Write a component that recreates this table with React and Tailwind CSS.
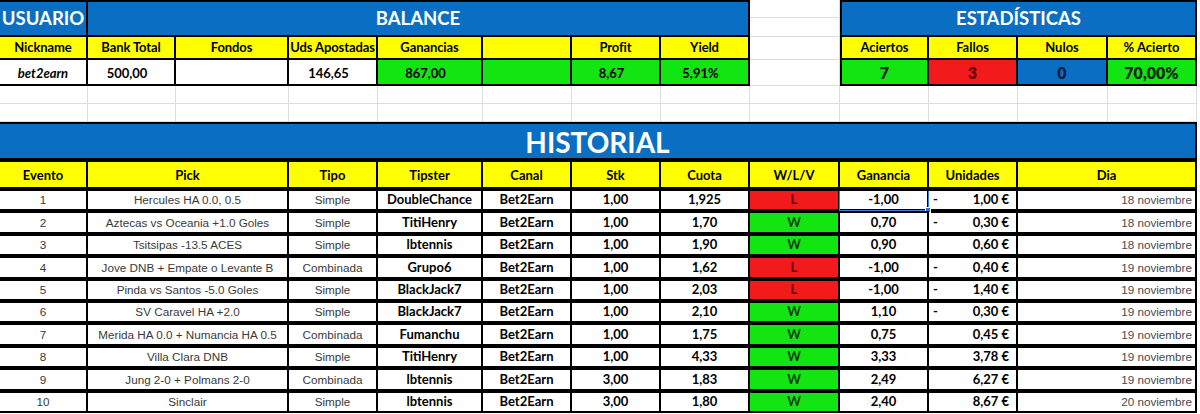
import React from "react";

const GRID =
  "grid grid-cols-[88px_88px_113px_89px_105px_89px_89px_89px_90px_89px_89px_90px_89px]";

const BLUE = "bg-[#0a6fc2]";
const YELLOW = "bg-[#ffff00]";
const GREEN = "bg-[#12e512]";
const RED = "bg-[#f21a1a]";

const rows = [
  [1, "Hercules HA 0.0, 0.5", "Simple", "DoubleChance", "Bet2Earn", "1,00", "1,925", "L", "-1,00", true, "1,00 €", "18 noviembre"],
  [2, "Aztecas vs Oceania +1.0 Goles", "Simple", "TitiHenry", "Bet2Earn", "1,00", "1,70", "W", "0,70", true, "0,30 €", "18 noviembre"],
  [3, "Tsitsipas -13.5 ACES", "Simple", "lbtennis", "Bet2Earn", "1,00", "1,90", "W", "0,90", false, "0,60 €", "18 noviembre"],
  [4, "Jove DNB + Empate o Levante B", "Combinada", "Grupo6", "Bet2Earn", "1,00", "1,62", "L", "-1,00", true, "0,40 €", "19 noviembre"],
  [5, "Pinda vs Santos -5.0 Goles", "Simple", "BlackJack7", "Bet2Earn", "1,00", "2,03", "L", "-1,00", true, "1,40 €", "19 noviembre"],
  [6, "SV Caravel HA +2.0", "Simple", "BlackJack7", "Bet2Earn", "1,00", "2,10", "W", "1,10", true, "0,30 €", "19 noviembre"],
  [7, "Merida HA 0.0 + Numancia HA 0.5", "Combinada", "Fumanchu", "Bet2Earn", "1,00", "1,75", "W", "0,75", false, "0,45 €", "19 noviembre"],
  [8, "Villa Clara DNB", "Simple", "TitiHenry", "Bet2Earn", "1,00", "4,33", "W", "3,33", false, "3,78 €", "19 noviembre"],
  [9, "Jung 2-0 + Polmans 2-0", "Combinada", "lbtennis", "Bet2Earn", "3,00", "1,83", "W", "2,49", false, "6,27 €", "19 noviembre"],
  [10, "Sinclair", "Simple", "lbtennis", "Bet2Earn", "3,00", "1,80", "W", "2,40", false, "8,67 €", "20 noviembre"],
];

const heads = ["Evento", "Pick", "Tipo", "Tipster", "Canal", "Stk", "Cuota", "W/L/V", "Ganancia", "Unidades", "Dia"];

const Cell = ({ className = "", justify = "justify-center", children }) => (
  <div className={`flex items-center ${justify} border-r-2 border-b-2 border-black whitespace-nowrap overflow-hidden ${className}`}>
    {children}
  </div>
);

const Blank = () => <div className="border-r border-b border-[#dcdcdc]" />;

const TopBlock = () => (
  <div className={`${GRID} grid-rows-[37px_23px_26px_18px_18px]`}>
    {/* row 1 */}
    <Cell className={`${BLUE} border-t-2 text-white font-bold text-[18.5px]`}>USUARIO</Cell>
    <Cell className={`${BLUE} col-span-7 border-t-2 text-white font-bold text-[18.5px]`}>BALANCE</Cell>
    <div className="row-span-3 flex flex-col">
      <div className="h-[18px] border-b border-r border-[#dcdcdc]" />
      <div className="h-[19px] border-b border-r border-[#dcdcdc]" />
      <div className="h-[23px] border-b border-r border-[#dcdcdc]" />
      <div className="h-[26px] border-b border-r border-[#dcdcdc]" />
    </div>
    <Cell className={`${BLUE} col-span-4 border-t-2 border-l-2 text-white font-bold text-[18.5px]`}>ESTADÍSTICAS</Cell>

    {/* row 2 */}
    {["Nickname", "Bank Total", "Fondos", "Uds Apostadas", "Ganancias", "", "Profit", "Yield"].map((h, i) => (
      <Cell key={i} className={`${YELLOW} font-bold text-[13px] tracking-[-0.1px]`}>{h}</Cell>
    ))}
    <Cell className={`${YELLOW} col-start-10 border-l-2 font-bold text-[13px]`}>Aciertos</Cell>
    <Cell className={`${YELLOW} font-bold text-[13px]`}>Fallos</Cell>
    <Cell className={`${YELLOW} font-bold text-[13px]`}>Nulos</Cell>
    <Cell className={`${YELLOW} font-bold text-[13px]`}>% Acierto</Cell>

    {/* row 3 */}
    <Cell className="bg-white font-bold italic text-[13px] pt-[3px]">bet2earn</Cell>
    <Cell className="bg-white font-bold text-[13px] pt-[3px] pr-2">500,00</Cell>
    <Cell className="bg-white" />
    <Cell className="bg-white font-bold text-[13px] pt-[3px] pr-2">146,65</Cell>
    <Cell className={`${GREEN} font-bold text-[13px] pt-[3px] pr-2`}>867,00</Cell>
    <Cell className={GREEN} />
    <Cell className={`${GREEN} font-bold text-[13px] pt-[3px] pr-2`}>8,67</Cell>
    <Cell className={`${GREEN} font-bold text-[13px] pt-[3px] pr-2`}>5,91%</Cell>
    <Cell className={`${GREEN} col-start-10 border-l-2 font-extrabold text-[16px] pt-[2px] text-[#0b2a0b]`}>7</Cell>
    <Cell className={`${RED} font-extrabold text-[16px] pt-[2px] text-[#6b0000]`}>3</Cell>
    <Cell className={`${BLUE} font-extrabold text-[16px] pt-[2px] text-[#08203e]`}>0</Cell>
    <Cell className={`${GREEN} font-extrabold text-[16px] pt-[2px] text-[#0b2a0b]`}>70,00%</Cell>

    {/* two empty spreadsheet rows */}
    {Array.from({ length: 26 }).map((_, i) => (
      <Blank key={i} />
    ))}
  </div>
);

const Row = ({ r, first }) => {
  const [n, pick, tipo, tipster, canal, stk, cuota, res, gan, neg, uds, dia] = r;
  const arial = "font-['Liberation_Sans',Arial,sans-serif] text-[11.7px] text-[#3a3a3a]";
  const cell = "h-[22.4px] border-t-2 border-b-0";
  return (
    <>
      <Cell className={`${cell} ${arial}`}>{n}</Cell>
      <Cell className={`${cell} ${arial} col-span-2`}>{pick}</Cell>
      <Cell className={`${cell} ${arial}`}>{tipo}</Cell>
      <Cell className={`${cell} font-bold text-[13px]`}>{tipster}</Cell>
      <Cell className={`${cell} font-bold text-[13px]`}>{canal}</Cell>
      <Cell className={`${cell} font-bold text-[13px]`}>{stk}</Cell>
      <Cell className={`${cell} font-bold text-[13px]`}>{cuota}</Cell>
      <Cell
        className={`${cell} ${res === "L" ? `${RED} text-[#6b0000]` : `${GREEN} text-[#0b3a0b]`} font-bold text-[13px]`}
      >
        {res}
      </Cell>
      <Cell className={`${cell} relative overflow-visible font-bold text-[13px]`}>
        {gan}
        {first && (
          <>
            <span className="absolute -left-px -right-[2px] top-0 -bottom-[2px] border border-t-0 border-[#3b7dd8]" />
            <span className="absolute -right-[4px] -bottom-[4px] w-[6px] h-[6px] bg-[#2f6fd6] border border-white" />
          </>
        )}
      </Cell>
      <Cell justify="justify-between" className={`${cell} pl-[4px] pr-[7px] font-bold text-[13px]`}>
        <span>{neg ? "-" : ""}</span>
        <span>{uds}</span>
      </Cell>
      <Cell justify="justify-end" className={`${cell} ${arial} col-span-2 pr-[3px] text-[#4a4a4a]`}>{dia}</Cell>
    </>
  );
};

const Historial = () => (
  <div className={GRID}>
    <Cell className={`${BLUE} col-span-13 h-[38px] border-t-2 border-b-0 text-white font-bold text-[28px] pt-[2px]`}>
      HISTORIAL
    </Cell>
    {heads.map((h) => (
      <Cell
        key={h}
        className={`${YELLOW} h-[29px] border-t-2 border-b-0 font-bold text-[13px] pt-[2px] ${
          h === "Pick" || h === "Dia" ? "col-span-2" : ""
        }`}
      >
        {h}
      </Cell>
    ))}
    {rows.map((r, i) => (
      <Row key={r[0]} r={r} first={i === 0} />
    ))}
  </div>
);

export default function App() {
  return (
    <div className="w-[1200px] h-[414px] overflow-hidden bg-white text-black font-['Lato',sans-serif]">
      <TopBlock />
      <Historial />
    </div>
  );
}
